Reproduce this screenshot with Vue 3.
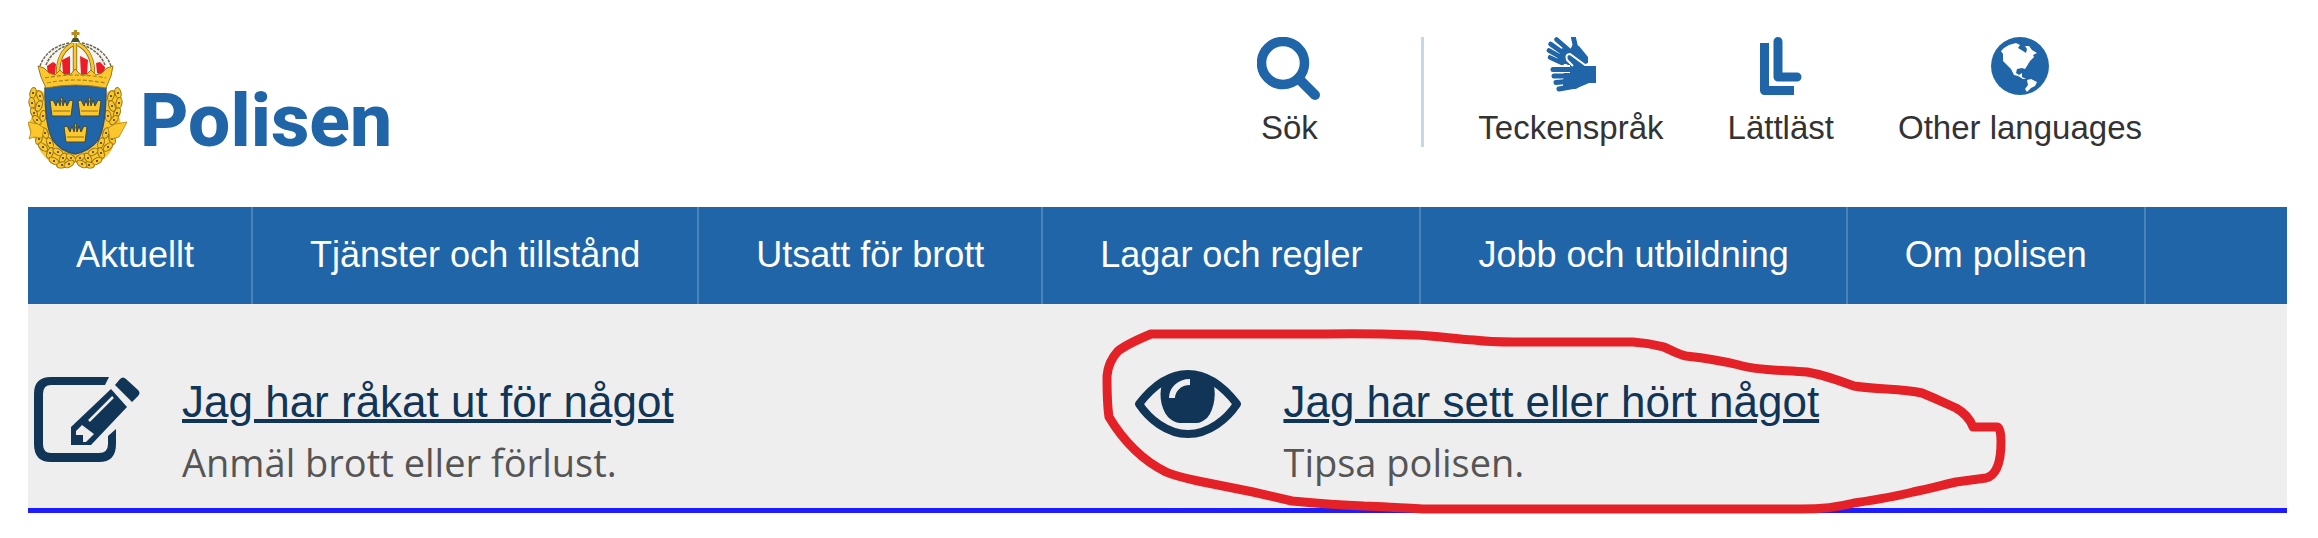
<template>
  <div class="page">
    <header class="header">
      <a href="#" class="logo">
        <svg class="crest" viewBox="0 0 100 140" aria-hidden="true">
          <!-- wreath -->
          <path d="M16 62 C10 58 4 60 3 66 C2 74 5 80 4 86 L0 95 C2 102 3 108 9 110 C9 120 16 126 22 132 C30 138 40 137 47 132 C55 137 65 138 72 132 C80 126 86 120 86 110 C92 107 96 102 91 86 C90 80 93 74 92 66 C91 60 85 58 79 62 L47 118 Z" fill="#fbc72d" />
          <g fill="#fbc72d" stroke="#8d701c" stroke-width="1">
            <ellipse
              v-for="(leaf, i) in leaves"
              :key="i"
              rx="3"
              ry="5.500"
              :transform="`translate(${leaf.x} ${leaf.y}) rotate(${leaf.angle})`"
            />
          </g>
          <g fill="#3d3314">
            <circle v-for="(leaf, i) in leaves" :key="i" :cx="leaf.x" :cy="leaf.y" r="1" />
          </g>
          <path d="M0 92 L10 94 L16 98 L14 108 L6 107 L1 109 L3 102 Z M99 92 L87 94 L80 98 L82 109 L91 107 Z" fill="#fbc72d" stroke="#a8871f" stroke-width="0.800" />
          <!-- shield -->
          <path d="M17 58 Q47 53 78 58 C78 82 76 100 70 110 C64 118 56 122 47 124 C38 122 30 118 25 110 C19 100 17 82 17 58 Z" fill="#2065a8" stroke="#38536b" stroke-width="1.5" />
          <g v-for="c in crowns" :key="c.x + '-' + c.y" :transform="`translate(${c.x} ${c.y})`">
            <path d="M1 19 L-1 4 L2 3 L5 9 L7 3 L9 9 L10 4 L9 1 L12 1 L11 4 L12 9 L14 3 L16 9 L19 3 L22 4 L20 19 Z" fill="#fbc72d" stroke="#3f4a3c" stroke-width="1" />
            <path d="M2 14 H19" stroke="#8a701f" stroke-width="1" />
          </g>
          <!-- royal crown -->
          <path d="M14 38 C16 24 30 13 47 13 C65 13 79 24 81 38 L76 50 H20 Z" fill="#f7f5ee" />
          <g fill="#ee1c25">
            <path d="M19 36 L25 32 L28 34 L27 45 L20 47 Z" />
            <path d="M34 30 L42 26 L42 45 L35 44 Z" />
            <path d="M52 26 L60 30 L59 44 L53 45 Z" />
            <path d="M68 33 L72 32 L77 37 L76 47 L69 43 Z" />
          </g>
          <g fill="none" stroke="#6a6453" stroke-width="1.500" stroke-dasharray="3 1">
            <path d="M12 36 C16 25 25 16 41 13" />
            <path d="M83 36 C79 25 70 16 54 13" />
            <path d="M18 35 C22 25 30 18 41 15" />
            <path d="M77 35 C73 25 65 18 54 15" />
          </g>
          <g fill="none" stroke="#7e691f" stroke-width="4.4">
            <path d="M30 43 C30 30 35 19 45 14" />
            <path d="M65 43 C65 30 60 19 50 14" />
            <path d="M47 44 V13" />
          </g>
          <g fill="none" stroke="#fbc72d" stroke-width="2.8">
            <path d="M30 43 C30 30 35 19 45 14" />
            <path d="M65 43 C65 30 60 19 50 14" />
            <path d="M47 44 V13" />
          </g>
          <path d="M10 36 L16 38 L21 43 L27 45 L32 40 L37 45 L43 44 L47 39 L52 44 L58 45 L63 40 L68 45 L74 43 L79 38 L85 36 L83 46 L78 58 Q47 52 18 58 L13 47 Z" fill="#fbc72d" stroke="#947922" stroke-width="1" />
          <path d="M17 48 Q47 42 78 48 M19 53 Q47 47 77 53" fill="none" stroke="#a3801c" stroke-width="1.2" stroke-dasharray="4 2" />
          <path d="M43 12 L45 8 H50 L52 12 Z" fill="#48502c" />
          <path d="M47.500 0 V8 M43.500 3.500 H51.500" stroke="#b58e20" stroke-width="3" />
        </svg>
        <span class="logo-text">Polisen</span>
      </a>

      <div class="tools">
        <button type="button" class="tool tool-search">
          <svg width="64" height="64" viewBox="0 0 64 64" aria-hidden="true">
            <circle cx="26" cy="26" r="21.500" fill="none" stroke="#2065a8" stroke-width="9.500" />
            <path d="M43 43 L58 58" stroke="#2065a8" stroke-width="10" stroke-linecap="round" />
          </svg>
          <span>Sök</span>
        </button>
        <a href="#" class="tool">
          <svg width="50" height="58" viewBox="0 2 50 58" aria-hidden="true">
            <g fill="none" stroke="#2065a8" stroke-linecap="round" stroke-width="4.600">
              <path d="M27.500 3 L31 18" stroke-width="5" />
              <path d="M10.500 4.500 L25 17" />
              <path d="M4.500 9 L20 20" />
              <path d="M3 15.500 L18 24" />
              <path d="M4 22.500 L16 28" />
            </g>
            <path d="M16 13 L24 15 L27 9 L33 11 L42 22 V28 L36 30 L18 29 L11 25 Z" fill="#2065a8" />
            <path d="M22 32 L19 21 Q20 17 24 19 L39 31 H50 V48 H43 L29 54 L17 51 L18 31 Z" fill="#2065a8" />
            <path d="M27 31 L21 25 Q19 19 24 19 L39 30" fill="none" stroke="#fff" stroke-width="2" />
            <path d="M6 34 H24" stroke="#fff" stroke-width="8" />
            <g fill="none" stroke="#2065a8" stroke-linecap="round" stroke-width="5">
              <path d="M7 34.500 H24" />
              <path d="M8 41 L24 41" />
              <path d="M10 47.500 L26 46" />
              <path d="M13 54 L30 51" />
            </g>
          </svg>
          <span>Teckenspråk</span>
        </a>
        <a href="#" class="tool">
          <svg width="42" height="58" viewBox="0 0 42 58" aria-hidden="true">
            <g fill="none" stroke="#2065a8" stroke-width="9" stroke-linejoin="round">
              <path d="M4.500 10 V53.500 H34" />
              <path d="M18 4.500 V40 H37" stroke-linecap="round" />
            </g>
            <path d="M0 6 H9 V12 H0 Z" fill="#2065a8" />
          </svg>
          <span>Lättläst</span>
        </a>
        <a href="#" class="tool">
          <svg width="58" height="58" viewBox="0 0 58 58" aria-hidden="true">
            <circle cx="29" cy="29" r="29" fill="#2065a8" />
            <path d="M10 14 L13 11 L18 8 L25 6 L29 8 L27 11 L32 14 L35 16 L36 12 L34 9 L38 9 L41 13 L46 16 L42 18 L43 20 L39 24 L36 29 L34 32 L31 31 L26 32 L25 36 L28 38 L31 36 L31 40 L35 42 L32 42 L27 39 L23 38 L20 32 L16 28 L12 24 L12 17 Z" fill="#fff" />
            <path d="M36 43 L40 42 L46 45 L44 49 L40 51 L36 55 L34 52 L37 48 Z" fill="#fff" />
          </svg>
          <span>Other languages</span>
        </a>
      </div>
    </header>

    <nav class="nav">
      <a v-for="item in menu" :key="item" href="#" class="nav-item">{{ item }}</a>
    </nav>

    <main class="shortcuts">
      <section class="card">
        <svg class="card-icon" width="106" height="86" viewBox="0 0 106 86" aria-hidden="true">
          <path d="M75 1 L71 9 H17 Q9 9 9 18 V68 Q9 77 17 77 H65 Q74 77 74 68 V60 L82 53 V68 Q82 86 65 86 H17 Q0 86 0 68 V18 Q0 1 17 1 Z" fill="#113556" />
          <path d="M37 51 L77 13 L93 31 L57 69 H37 Z" fill="#113556" />
          <path d="M81 9 L86 3 Q89 0 92 3 L104 14 Q107 17 104 20 L98 26 Z" fill="#113556" />
          <path d="M42 55 L48 49 L60 58 L52 66 H49 V59 H42 Z" fill="#eee" />
          <path d="M55 45 L79 21" stroke="#eee" stroke-width="2.500" />
        </svg>
        <div class="card-body">
          <h2><a href="#">Jag har råkat ut för något</a></h2>
          <p>Anmäl brott eller förlust.</p>
        </div>
      </section>

      <section class="card">
        <svg class="card-icon" width="106" height="86" viewBox="0 0 106 86" aria-hidden="true">
          <path d="M4 28 C14 15 30 -2 53 -2 S92 15 102 28 C92 43 74 58 53 58 S14 43 4 28 Z" fill="none" stroke="#113556" stroke-width="8" stroke-linejoin="round" />
          <path d="M29 4 C38 -4 68 -4 77 4 C82 14 80 33 72 42 Q66 47 62 47 H44 Q38 46 33 41 C25 32 23 14 29 4 Z" fill="#113556" />
          <path d="M37 22 C37 14 44 6 55 6" fill="none" stroke="#eee" stroke-width="6" />
        </svg>
        <div class="card-body">
          <h2><a href="#">Jag har sett eller hört något</a></h2>
          <p>Tipsa polisen.</p>
        </div>
        <!-- freehand ring round the tip link -->
        <svg class="ring" width="912" height="194" viewBox="0 0 912 194" aria-hidden="true">
          <path d="M52 10 H225 C265 9 290 10 316 11 C340 12 355 15 375 16 C390 18 400 18 415 18 H534 C550 19 557 21 565 23 C572 26 578 30 587 32 C605 34 620 36 640 41 C660 47 685 46 708 48 C725 51 736 55 755 62 C780 66 802 64 823 69 C840 76 848 80 857 84 C866 89 871 95 874 103 H898 Q902 103 902 118 Q902 150 887 154 L857 158 C840 162 830 165 814 168 C795 173 775 176 755 179 C735 184 720 185 703 185 H324 C290 183 270 182 265 182 C240 181 215 179 193 177 L154 168 L99 157 C85 154 76 152 67 148 C45 137 25 118 10 93 Q8 80 8 52 Q9 38 19 27 C28 20 40 15 52 10 Z" />
        </svg>
      </section>
    </main>
  </div>
</template>

<script setup>
const menu = [
  'Aktuellt',
  'Tjänster och tillstånd',
  'Utsatt för brott',
  'Lagar och regler',
  'Jobb och utbildning',
  'Om polisen'
]

// small crowns on the shield
const crowns = [
  { x: 23, y: 67 },
  { x: 51, y: 67 },
  { x: 37, y: 93 }
]

// leaves on the left half of the wreath
const leftLeaves = [
  { x: 5, y: 63, angle: 15 },
  { x: 12, y: 66, angle: -20 },
  { x: 4, y: 73, angle: -10 },
  { x: 11, y: 76, angle: 20 },
  { x: 6, y: 83, angle: -25 },
  { x: 15, y: 86, angle: 10 },
  { x: 9, y: 90, angle: -40 },
  { x: 17, y: 103, angle: -20 },
  { x: 11, y: 109, angle: 20 },
  { x: 15, y: 117, angle: -50 },
  { x: 22, y: 113, angle: -20 },
  { x: 22, y: 123, angle: 20 },
  { x: 30, y: 122, angle: -60 },
  { x: 26, y: 131, angle: -60 },
  { x: 35, y: 128, angle: 30 },
  { x: 34, y: 135, angle: 80 },
  { x: 43, y: 128, angle: -50 },
  { x: 41, y: 134, angle: 60 }
]

const leaves = leftLeaves.flatMap((leaf) => [
  leaf,
  { x: 95 - leaf.x, y: leaf.y, angle: -leaf.angle }
])
</script>

<style>
body {
  margin: 0;
  background: #fff;
}
</style>

<style scoped>
.page {
  padding: 0 31px 24px 28px;
  font-family: "Liberation Sans", Arial, sans-serif;
  color: #333;
}

.header {
  display: flex;
  justify-content: space-between;
  align-items: flex-start;
  padding: 30px 145px 37px 0;
}

.logo {
  display: flex;
  align-items: flex-end;
  gap: 12px;
  color: #2065a8;
  text-decoration: none;
}

.crest {
  width: 100px;
  height: 140px;
}

.logo-text {
  padding-bottom: 8px;
  font-family: Roboto, sans-serif;
  font-size: 75px;
  font-weight: 800;
  line-height: 84px;
}

.tools {
  display: flex;
  align-items: stretch;
  gap: 64px;
  padding-top: 7px;
}

.tool {
  display: flex;
  flex-direction: column;
  align-items: center;
  justify-content: space-between;
  height: 110px;
  font-family: inherit;
  font-size: 33px;
  line-height: 38px;
  color: #333;
  text-decoration: none;
  white-space: nowrap;
}

.tool-search {
  padding: 0 100px 0 0;
  margin-right: -10px;
  background: none;
  border: none;
  border-right: 3px solid #c5d8ea;
  cursor: pointer;
}

.nav {
  display: flex;
  background: #2065a8;
}

.nav-item {
  padding: 28px 57px 29px;
  border-right: 2px solid #4a83b9;
  font-size: 36px;
  line-height: 40px;
  color: #fff;
  text-decoration: none;
  white-space: nowrap;
}

.nav-item:first-child {
  padding-left: 48px;
}

.shortcuts {
  display: grid;
  grid-template-columns: 22fr 23fr;
  padding: 72px 0 20px 6px;
  background: #eee;
  border-bottom: 5px solid #1c1cff;
}

.card {
  position: relative;
  display: flex;
  align-items: flex-start;
  gap: 42px;
}

.card-icon {
  overflow: visible;
}

.card-body h2 {
  margin: 0;
  font-size: 44px;
  font-weight: 400;
  line-height: 52px;
}

.card-body a {
  color: #113556;
  text-decoration-thickness: 4px;
}

.card-body p {
  margin: 8px 0 0;
  font-family: "Open Sans", sans-serif;
  font-size: 38px;
  line-height: 52px;
  color: #555;
}

.ring {
  position: absolute;
  top: -52px;
  left: -36px;
  pointer-events: none;
}

.ring path {
  fill: none;
  stroke: #e52128;
  stroke-width: 9px;
  stroke-linejoin: round;
}
</style>
